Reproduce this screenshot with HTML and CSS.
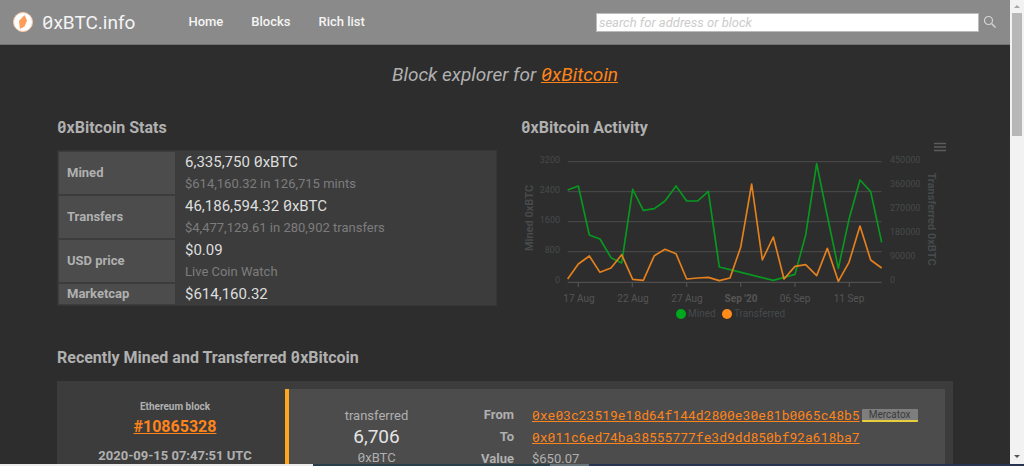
FILE: index.html
```html
<!DOCTYPE html>
<html lang="en">
<head>
<meta charset="utf-8">
<title>0xBTC.info</title>
<link rel="stylesheet" href="styles.css">
</head>
<body>
<div class="page">
  <header class="topbar">
    <a class="brand" href="#">
      <svg class="logo" viewBox="0 0 22 22" aria-hidden="true"><circle cx="11" cy="11" r="9.500" fill="#fff" stroke="#f9c9a8"/><path d="M12.500 4 15 9.500 12.500 15.500 8 18 7 10Z" fill="#ff9c56"/></svg>
      <span><span class="zero">0</span>xBTC.info</span>
    </a>
    <nav class="nav"><a href="#">Home</a><a href="#">Blocks</a><a href="#">Rich list</a></nav>
    <form class="search">
      <input type="text" aria-label="Search" placeholder="search for address or block">
      <button type="button" aria-label="Search"><svg viewBox="0 0 14 14" aria-hidden="true"><circle cx="5.500" cy="5.500" r="4" fill="none" stroke="#d4d4d4" stroke-width="1.200"/><path d="M8.500 8.500 12.500 12.500" stroke="#d4d4d4" stroke-width="1.400"/></svg></button>
    </form>
  </header>
  <main class="content">
    <h1>Block explorer for <a href="#"><span class="zero">0</span>xBitcoin</a></h1>
    <div class="columns">
      <section>
        <h2><span class="zero">0</span>xBitcoin Stats</h2>
        <table class="stats">
          <tr><th scope="row">Mined</th><td><div class="big">6,335,750 <span class="zero">0</span>xBTC</div><div class="sub">$614,160.32 in 126,715 mints</div></td></tr>
          <tr><th scope="row">Transfers</th><td><div class="big">46,186,594.32 <span class="zero">0</span>xBTC</div><div class="sub">$4,477,129.61 in 280,902 transfers</div></td></tr>
          <tr><th scope="row">USD price</th><td><div class="big">$0.09</div><div class="sub">Live Coin Watch</div></td></tr>
          <tr><th scope="row">Marketcap</th><td><div class="big last">$614,160.32</div></td></tr>
        </table>
      </section>
      <section>
        <h2><span class="zero">0</span>xBitcoin Activity</h2>
        <svg class="chart" viewBox="0 0 432 185" role="img" aria-label="Mined and transferred 0xBTC over time">
          <g transform="translate(-6 -30) scale(.33333)" fill="none" stroke-linejoin="round">
            <path d="M158 155H1100M158 245H1100M158 335H1100M158 425H1100" stroke="#464646" stroke-width="4"/>
            <path d="M158 517H1100M190 517V531M352 517V531M515 517V531M677 517V531M840 517V531M1003 517V531" stroke="#4e4e4e" stroke-width="4"/>
            <path d="M158 240 190 228 223 375 255 387 288 443 320 459 353 238 385 301 418 296 450 273 483 228 515 273 548 273 580 244 613 471 645 479 775 511 840 493 872 375 905 161 937 318 970 475 1002 328 1035 210 1067 245 1100 397" stroke="#089820" stroke-width="5"/>
            <path d="M158 507 190 462 223 438 255 487 288 474 320 434 353 508 385 511 418 437 450 418 483 431 515 507 548 504 580 502 613 512 645 504 677 412 710 222 742 450 775 381 807 507 840 469 872 464 905 497 937 415 970 514 1002 457 1035 348 1067 450 1100 474" stroke="#e4801d" stroke-width="5"/>
          </g>
          <g class="tick end"><text x="39" y="23">3200</text><text x="39" y="53">2400</text><text x="39" y="83">1600</text><text x="39" y="113">800</text><text x="39" y="143">0</text></g>
          <g class="tick"><text x="369" y="23">450000</text><text x="369" y="47">360000</text><text x="369" y="71">270000</text><text x="369" y="95">180000</text><text x="369" y="119">90000</text><text x="369" y="143">0</text></g>
          <g class="date"><text x="58" y="162">17 Aug</text><text x="112" y="162">22 Aug</text><text x="166" y="162">27 Aug</text><text x="220" y="162" class="strong">Sep '20</text><text x="274" y="162">06 Sep</text><text x="328" y="162">11 Sep</text></g>
          <text class="axis" transform="translate(12 78) rotate(-90)">Mined 0xBTC</text>
          <text class="axis" transform="translate(407 79) rotate(90)">Transferred 0xBTC</text>
          <path d="M413 3.500H425M413 7H425M413 10.500H425" stroke="#5c5c5c" stroke-width="1.300"/>
          <circle cx="160" cy="174" r="5" fill="#00a81e"/><circle cx="206" cy="174" r="5" fill="#ff8c1a"/>
          <g class="legend"><text x="167" y="177">Mined</text><text x="213" y="177">Transferred</text></g>
        </svg>
      </section>
    </div>
    <section>
      <h2>Recently Mined and Transferred <span class="zero">0</span>xBitcoin</h2>
      <div class="panel">
        <div class="block">
          <div class="label">Ethereum block</div>
          <a href="#">#10865328</a>
          <div class="time">2020-09-15 07:47:51 UTC</div>
        </div>
        <div class="transfer">
          <div class="amount"><div>transferred</div><div class="number">6,706</div><div><span class="zero">0</span>xBTC</div></div>
          <dl class="details">
            <dt>From</dt><dd><a href="#">0xe03c23519e18d64f144d2800e30e81b0065c48b5</a><span class="tag">Mercatox</span></dd>
            <dt>To</dt><dd><a href="#">0x011c6ed74ba38555777fe3d9dd850bf92a618ba7</a></dd>
            <dt>Value</dt><dd>$650.07</dd>
          </dl>
        </div>
      </div>
    </section>
  </main>
</div>
<div class="scrollbar" aria-hidden="true"><i class="up"></i><i class="thumb"></i><i class="down"></i></div>
<div class="edge" aria-hidden="true"><i></i><i></i><i></i><i></i></div>
</body>
</html>
```
FILE: styles.css
```css
* { box-sizing: border-box; }
body {
  margin: 0;
  height: 100vh;
  overflow: hidden;
  display: grid;
  grid-template: minmax(0, 1fr) 2px / minmax(0, 1fr) 14px;
  background: #2d2d2d;
  color: #b0b0b0;
  font: 13px/20px Roboto, sans-serif;
}
a { color: #ff8419; }
.zero { font-family: "Roboto Mono", "Noto Sans", sans-serif; font-feature-settings: "zero"; line-height: 1; }
.page { overflow: hidden; }

.topbar {
  display: flex;
  align-items: center;
  height: 45px;
  padding: 0 13px 0 12px;
  background: #8a8a8a;
  border-bottom: 1px solid #727272;
}
.topbar a { color: #f4f4f4; text-decoration: none; }
.brand { display: flex; align-items: center; gap: 8px; font-size: 19px; }
.logo { width: 22px; height: 22px; }
.nav { display: flex; gap: 28px; margin-left: 53px; font-weight: 500; }
.search { display: flex; align-items: center; gap: 4px; flex: 1; margin-left: 231px; }
.search input {
  flex: 1;
  min-width: 0;
  height: 19px;
  padding: 0 2px;
  border: 1px solid #bbb;
  background: #fff;
  font: italic 13px Roboto, sans-serif;
}
.search input::placeholder { color: #ccc; opacity: 1; }
.search button { display: flex; padding: 0; border: 0; background: none; }
.search svg { width: 14px; height: 14px; }

.content { width: 896px; max-width: 100%; margin: 0 auto; }
h1 { margin: 18px 0 0; font-size: 19px; font-style: italic; font-weight: 400; line-height: 24px; text-align: center; }
h2 { margin: 0; font-size: 16px; font-weight: 700; line-height: 24px; }
.columns { display: grid; grid-template-columns: 440fr 432fr; gap: 24px; margin: 29px 0 21px; }

.stats { width: 100%; margin-top: 10px; border-spacing: 2px; background: #3c3c3c; outline: 1px solid #353535; outline-offset: -1px; }
.stats th { width: 116px; padding: 0 8px; background: #4c4c4c; text-align: left; font-weight: 700; }
.stats td { padding: 0 8px; }
.big { color: #dedede; font-size: 15px; line-height: 21px; }
.last { line-height: 20px; }
.sub { color: #7c7c7c; line-height: 21px; }

.chart { display: block; width: 100%; font-size: 9px; fill: #464a4c; }
.chart .end { text-anchor: end; }
.date { font-size: 10px; text-anchor: middle; fill: #555; }
.strong { font-weight: 700; }
.axis { font-size: 11px; font-weight: 700; text-anchor: middle; }
.legend { font-size: 10px; }

.panel { display: grid; grid-template-columns: 220px minmax(0, 1fr); margin-top: 11px; padding: 8px; background: #3c3c3c; }
.block { padding: 9px 0 0 16px; text-align: center; font-weight: 700; }
.block { padding-left: 0; }
.block .label { font-size: 10px; line-height: 18px; }
.block a { font-size: 16px; line-height: 22px; }
.time { margin-top: 8px; }
.transfer { display: grid; grid-template-columns: 175px minmax(0, 1fr); min-height: 120px; border-left: 4px solid #ffa620; background: #4c4c4c; }
.amount { padding-top: 17px; text-align: center; }
.amount .number { color: #e4e4e4; font-size: 19px; line-height: 22px; }
.details { display: grid; grid-template-columns: 50px minmax(0, 1fr); column-gap: 18px; align-content: start; margin: 15px 0 0; line-height: 22px; }
.details dt { font-weight: 700; text-align: right; }
.details dd { display: flex; align-items: center; gap: 2px; margin: 0; }
.details a { font-family: "Roboto Mono", "Liberation Mono", monospace; }
.tag { width: 56px; border-bottom: 2px solid #e8cd3c; border-radius: 1px; background: #7e7e7e; color: #3a3a3a; font-size: 10px; line-height: 11px; text-align: center; }

.scrollbar { display: flex; flex-direction: column; align-items: center; background: #f2f2f2; }
.up, .down { border: 3px solid transparent; }
.up { margin: 2px 0 5px; border-bottom-color: #a5a5a5; }
.thumb { width: 10px; height: 123px; background: #b7b7b7; }
.down { margin: auto 0 3px; border-top-color: #555; }
.edge { grid-column: 1 / -1; display: grid; grid-template-columns: 313fr 237fr 39fr 435fr; }
.edge i { background: #29404c; }
.edge i:first-child { background: #ececec; }
.edge i:nth-child(3) { background: #66737b; }
.edge i:last-child { background: #26354f; }
```
